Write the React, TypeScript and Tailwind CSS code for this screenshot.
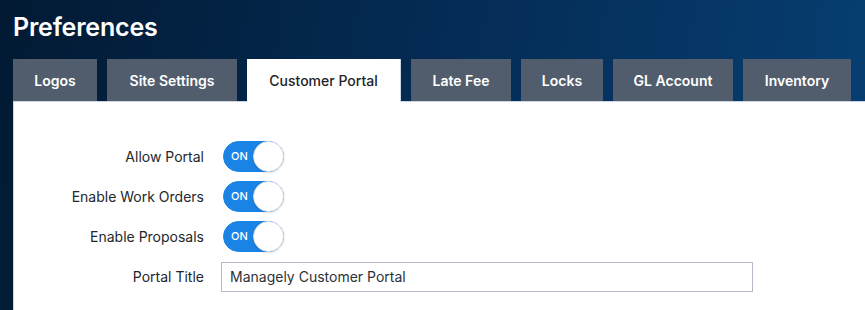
import React, { useState } from "react";

const tabs = [
  { name: "Logos", w: "w-[84px]" },
  { name: "Site Settings", w: "w-[130px]" },
  { name: "Customer Portal", w: "w-[154px]" },
  { name: "Late Fee", w: "w-[100px]" },
  { name: "Locks", w: "w-[82px]" },
  { name: "GL Account", w: "w-[120px]" },
  { name: "Inventory", w: "w-[108px]" },
];

const Toggle = ({ on, onChange }: { on: boolean; onChange: () => void }) => (
  <button
    onClick={onChange}
    className={`relative flex items-center w-[61px] h-[31px] rounded-full border ${
      on ? "bg-[#1a84e6] border-[#1a84e6]" : "bg-[#e5e7eb] border-[#d4d7dc]"
    }`}
  >
    <span
      className={`text-[11px] font-medium pl-[7px] ${on ? "text-white" : "text-transparent"}`}
    >
      ON
    </span>
    <span
      className={`absolute top-[-1px] w-[31px] h-[31px] rounded-full bg-white border border-[#dcdfe4] shadow-sm ${
        on ? "right-[-1px]" : "left-[-1px]"
      }`}
    ></span>
  </button>
);

export default function App() {
  const [active, setActive] = useState("Customer Portal");
  const [flags, setFlags] = useState({ portal: true, work: true, proposals: true });
  const [title, setTitle] = useState("Managely Customer Portal");

  const rows: { key: keyof typeof flags; label: string }[] = [
    { key: "portal", label: "Allow Portal" },
    { key: "work", label: "Enable Work Orders" },
    { key: "proposals", label: "Enable Proposals" },
  ];

  return (
    <div
      className="w-[865px] h-[310px] overflow-hidden flex flex-col bg-[linear-gradient(100deg,#021a33_0%,#042a52_45%,#073f73_100%)]"
      style={{ fontFamily: "Inter, 'Noto Sans', sans-serif" }}
    >
      <h1 className="pl-[13px] pt-[9px] h-[59px] text-[25px] font-semibold text-white tracking-[-0.2px]">
        Preferences
      </h1>

      <div className="flex gap-[10px] pl-[13px] h-[42px]">
        {tabs.map((t) =>
          t.name === active ? (
            <button
              key={t.name}
              onClick={() => setActive(t.name)}
              className={`${t.w} h-[43px] bg-white text-[#1f2328] text-[14px] font-medium border-r border-[#cbd5e1] z-10`}
            >
              {t.name}
            </button>
          ) : (
            <button
              key={t.name}
              onClick={() => setActive(t.name)}
              className={`${t.w} h-[42px] bg-[#515d6c] text-white text-[14px] font-semibold`}
            >
              {t.name}
            </button>
          )
        )}
      </div>

      <div className="ml-[13px] flex-1 bg-white border-t border-l border-[#cbd5e1] pt-[39px]">
        <div className="flex flex-col gap-[9px]">
          {rows.map((r) => (
            <div key={r.key} className="flex items-center h-[31px]">
              <label className="w-[209px] text-right text-[14px] text-[#23272d] pr-[19px]">
                {r.label}
              </label>
              <Toggle
                on={flags[r.key]}
                onChange={() => setFlags({ ...flags, [r.key]: !flags[r.key] })}
              />
            </div>
          ))}
          <div className="flex items-center h-[31px]">
            <label className="w-[207px] text-right text-[14px] text-[#23272d] pr-[17px]">
              Portal Title
            </label>
            <input
              value={title}
              onChange={(e) => setTitle(e.target.value)}
              className="w-[532px] h-[30px] border border-[#b3bac5] px-[8px] text-[14px] text-[#2d3139] outline-none"
            />
          </div>
        </div>
      </div>
    </div>
  );
}
